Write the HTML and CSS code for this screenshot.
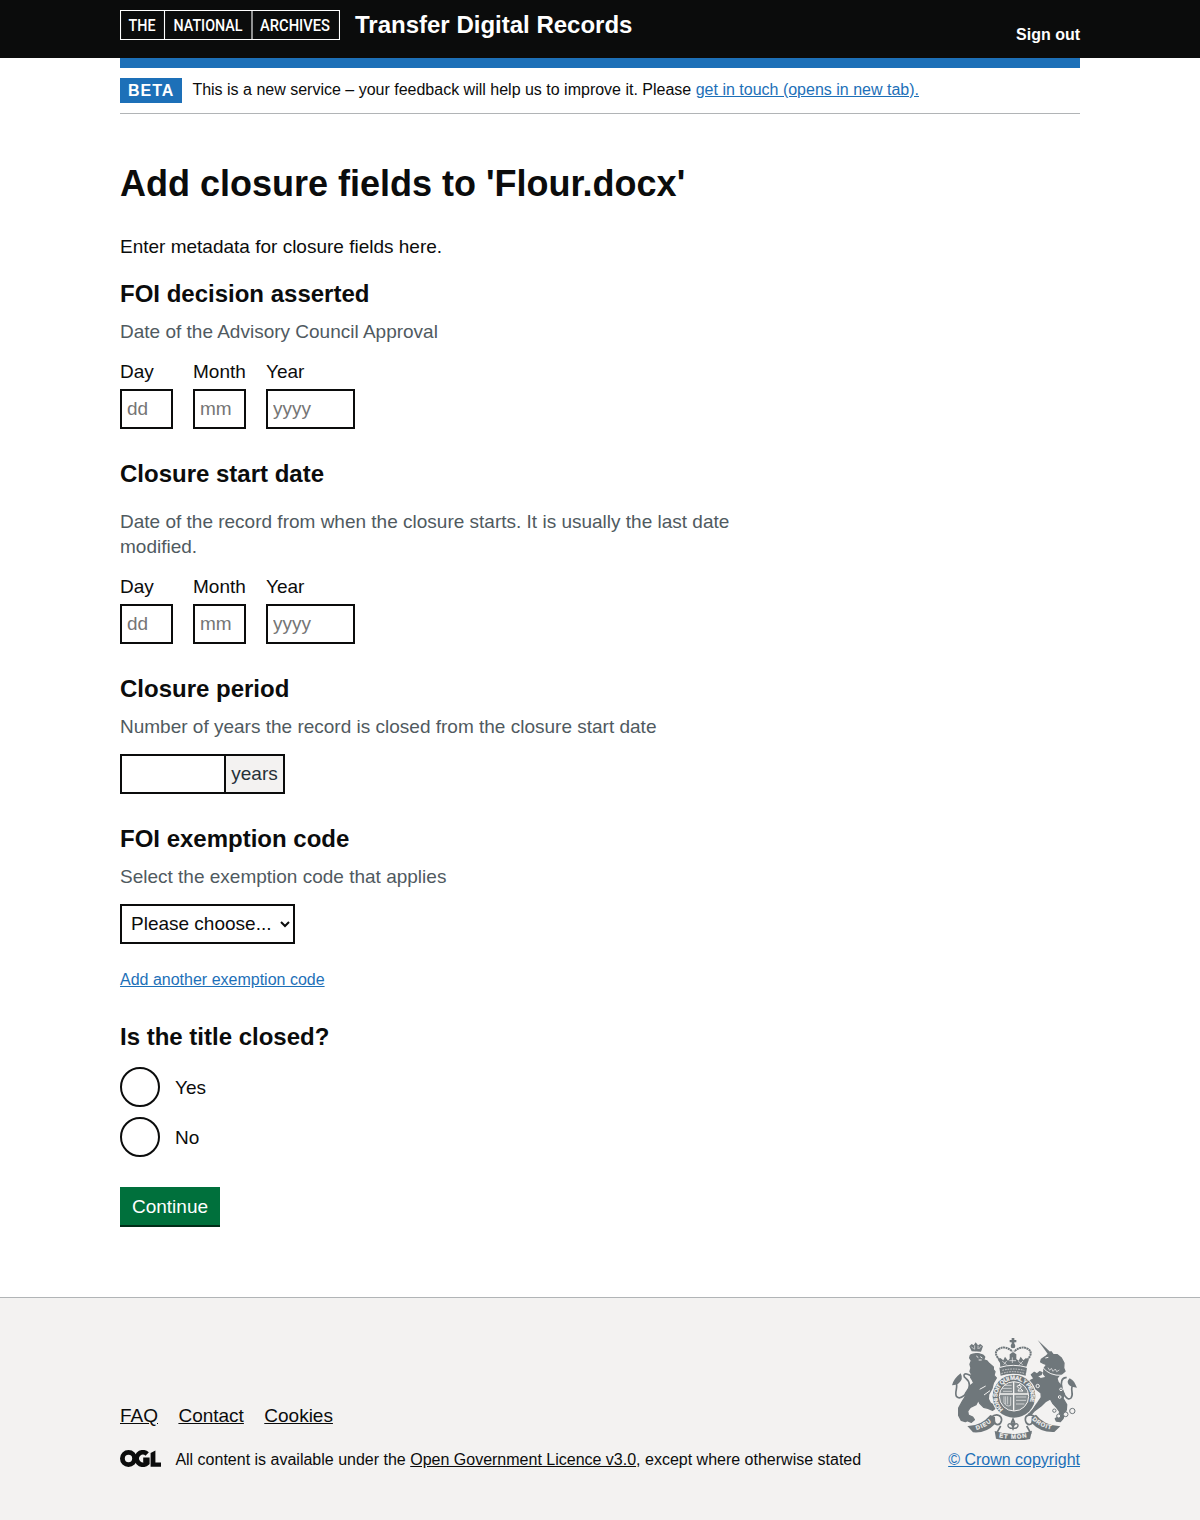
FILE: index.html
```html
<!DOCTYPE html>
<html lang="en">
<head>
<meta charset="utf-8">
<title>Add closure fields - Transfer Digital Records</title>
<link rel="stylesheet" href="styles.css">
</head>
<body>
<header class="header">
  <div class="container header-inner">
    <svg class="logo" width="220" height="30" viewBox="0 0 220 30" role="img" aria-label="The National Archives">
      <path d="M.5 .5H219.5V29.5H.5ZM44.5 1V29M132 1V29" fill="none" stroke="#fff" stroke-width="1.1"/>
      <g class="logo-text">
        <text x="8.5" y="20.8" textLength="27" lengthAdjust="spacingAndGlyphs">THE</text>
        <text x="53.5" y="20.8" textLength="69" lengthAdjust="spacingAndGlyphs">NATIONAL</text>
        <text x="140" y="20.8" textLength="70" lengthAdjust="spacingAndGlyphs">ARCHIVES</text>
      </g>
    </svg>
    <span class="service">Transfer Digital Records</span>
    <a class="signout" href="#">Sign out</a>
  </div>
</header>
<div class="container">
  <div class="bar"></div>
  <div class="phase">
    <strong class="tag">BETA</strong>
    <span>This is a new service – your feedback will help us to improve it. Please <a class="link" href="#">get in touch (opens in new tab).</a></span>
  </div>
  <main class="main">
    <h1>Add closure fields to 'Flour.docx'</h1>
    <p class="intro">Enter metadata for closure fields here.</p>
    <form>
      <section class="group">
        <h2>FOI decision asserted</h2>
        <p class="hint">Date of the Advisory Council Approval</p>
        <div class="dates">
          <label>Day<input class="w2" placeholder="dd"></label>
          <label>Month<input class="w2" placeholder="mm"></label>
          <label>Year<input class="w4" placeholder="yyyy"></label>
        </div>
      </section>
      <section class="group">
        <h2 class="spaced">Closure start date</h2>
        <p class="hint">Date of the record from when the closure starts. It is usually the last date modified.</p>
        <div class="dates">
          <label>Day<input class="w2" placeholder="dd"></label>
          <label>Month<input class="w2" placeholder="mm"></label>
          <label>Year<input class="w4" placeholder="yyyy"></label>
        </div>
      </section>
      <section class="group">
        <h2>Closure period</h2>
        <p class="hint">Number of years the record is closed from the closure start date</p>
        <div class="period"><input class="w5" aria-label="Years"><span class="suffix">years</span></div>
      </section>
      <section class="group code">
        <h2>FOI exemption code</h2>
        <p class="hint">Select the exemption code that applies</p>
        <select class="select"><option>Please choose...</option></select>
        <a class="link add" href="#">Add another exemption code</a>
      </section>
      <section class="group">
        <h2 class="radio-title">Is the title closed?</h2>
        <div class="radios">
          <label><input type="radio" name="closed">Yes</label>
          <label><input type="radio" name="closed">No</label>
        </div>
      </section>
      <button class="button" type="button">Continue</button>
    </form>
  </main>
</div>
<footer class="footer">
  <div class="container footer-inner">
    <div>
      <nav class="nav"><a href="#">FAQ</a><a href="#">Contact</a><a href="#">Cookies</a></nav>
      <div class="licence">
        <svg class="ogl" width="41" height="17" viewBox="0 0 41 17" role="img" aria-label="OGL">
          <circle cx="8.5" cy="8.5" r="6.1" fill="none" stroke="#0b0c0c" stroke-width="4.8"/>
          <path d="M27.2 4A6.2 6.2 0 1 0 27.2 13V9.9H23.2" fill="none" stroke="#0b0c0c" stroke-width="4.8"/>
          <path d="M30.6 3.1 35.4.4V12.4H41V16.7H30.6Z" fill="#0b0c0c"/>
        </svg>
        <span>All content is available under the <a href="#">Open Government Licence v3.0</a>, except where otherwise stated</span>
      </div>
    </div>
    <div class="crown">
      <svg width="125" height="102" viewBox="36 39 375 306" aria-hidden="true">
        <defs>
          <path id="garter" d="M190 253A50 50 0 1 1 254 253"/>
          <path id="ribbon-left" d="M109 315Q141 306 161 284"/>
          <path id="ribbon-mid" d="M177 337Q219 346 264 336"/>
          <path id="ribbon-right" d="M276 283Q300 308 337 314"/>
        </defs>
        <g fill="#6f777b">
          <!-- lion -->
          <g stroke="#6f777b" stroke-width="4" stroke-linejoin="round">
            <path d="M91 91 99 86 118 86 130 91 134 96 131 105 141 108 147 115 160 126 160 134 165 140 162 151 169 159 160 174 156 190 146 208 145 222 151 234 164 242 166 250 158 256 144 250 131 247 119 235 115 225 108 239 91 247 83 258 85 270 98 276 103 284 94 292 82 287 76 290 64 286 56 271 56 249 67 229 75 216 76 205 84 193 92 181 101 174 97 165 92 157 94 147 90 139 93 129 90 118 94 107 89 99Z"/>
          </g>
          <path d="M95 79 88 64 95 57 101 61 107 52 114 61 121 57 129 64 123 80Z"/>
          <path d="M36 181Q41 161 62 145Q71 162 57 174 51 180 36 181Z"/>
          <!-- unicorn -->
          <path d="M293 45 331 81 325 89Z"/>
          <g stroke="#6f777b" stroke-width="4" stroke-linejoin="round">
            <path d="M326 86 333 80 339 88 352 89 364 99 372 114 371 129 375 139 365 147 357 152 351 160 354 171 361 180 367 195 373 207 369 220 380 239 379 254 373 267 369 281 361 290 349 288 346 281 357 275 359 260 350 248 339 236 331 222 316 230 303 243 284 257 274 268 264 272 267 263 280 252 294 232 304 217 303 204 287 191 281 179 270 175 268 168 282 161 274 149 283 142 291 147 299 140 306 143 303 149 291 153 302 161 319 157 311 147 312 130 320 119 310 115 302 111 304 103 316 95Z"/>
          </g>
          <path d="M389 160Q398 164 403 172L411 188Q394 187 387 180 378 170 389 160Z"/>
          <!-- royal crown -->
          <circle cx="219" cy="63" r="7"/><path d="M215 39h8v29h-8zM209 45h20v7h-20z"/>
          <path d="M180 114 174 105 181 99 190 106 195 95 204 107 209 101 209 88 219 81 229 88 229 102 236 107 242 95 250 106 258 99 266 106 258 128 181 128Z"/>
          <path d="M178 128Q219 118 261 128L257 152Q219 140 182 152Z"/>
          <circle cx="222" cy="214" r="67" fill="#f3f2f1"/>
          <circle cx="222" cy="214" r="64"/>
          <!-- ribbons -->
          <path d="M82 303Q122 304 151 270L165 276 166 296Q137 326 99 322ZM343 321 361 304Q311 301 288 269L275 276 274 293Q302 323 343 321ZM164 318Q219 337 276 317L270 342Q219 353 168 341Z"/>
        </g>
        <g fill="none" stroke="#6f777b" stroke-width="5">
          <path d="M47 172C57 185 41 203 50 215 61 226 87 206 88 180 88 160 70 161 72 151 73 143 86 148 93 153" stroke-width="5"/>
          <path d="M401 178C386 190 404 206 393 219 381 230 368 204 366 190 361 174 365 155 380 158" stroke-width="5"/>
          <path d="M184 110C164 91 163 78 178 71 195 62 211 73 217 80M256 110C277 91 276 78 262 71 245 62 229 73 222 80" stroke-width="6" stroke-dasharray="6 1.5"/>
          <path d="M153 277C171 262 188 273 184 289 180 302 166 303 162 288M287 277C270 262 252 272 257 289 262 302 275 302 279 288M182 303 169 326M260 303 273 326"/>
          <circle cx="343" cy="257" r="5" stroke-width="3" fill="#f3f2f1"/><circle cx="356" cy="273" r="6" stroke-width="3" fill="#f3f2f1"/><circle cx="377" cy="268" r="7" stroke-width="3" fill="#f3f2f1"/><circle cx="397" cy="258" r="8" stroke-width="3"/>
        </g>
        <circle cx="222" cy="214" r="44" fill="#858c8f" stroke="#f3f2f1" stroke-width="3"/>
        <g fill="none" stroke="#f3f2f1" stroke-width="3">
          <path d="M221 171V257M179 207H265" stroke-width="4"/>
          <path d="M187 190h28M189 199h27M195 181h20M228 216h31M228 226h30M228 237h25M192 214v19q8 14 20 8v-25M197 214v23M203 214v24" stroke-width="2"/>
          <path d="M231 184q7-7 13 0l-3 6 8 8h-15l4-7zM239 177v6"/>
          <path d="M93 85Q110 79 130 85M180 127Q219 115 261 127"/>
          <path d="M109 93l6 5M121 95l6 4M116 105h9M316 99l9-2M137 183 119 193M150 197 132 210M308 127Q328 153 366 151"/>
          <path d="M187 136Q219 128 253 136M184 146Q219 134 256 146" stroke-width="2" stroke-dasharray="5 3"/>
          <path d="M94 65 102 73M104 61v12M114 62v10M124 63l-8 9M187 109l13 10M200 108l-9 11M217 97v17M208 107h20M235 109l13 10M249 108l-11 11" stroke-width="2"/>
          <path d="M324 128l5 8 5-6 5 9 7-7 4 8 8-5" stroke-width="2"/>
          <circle cx="293" cy="183" r="5"/><circle cx="363" cy="193" r="4"/><circle cx="359" cy="216" r="4"/>
        </g>
        <g fill="none" stroke="#6f777b" stroke-width="4">
          <path d="M219 285v31M219 309C205 313 201 300 206 297 213 294 217 301 219 308M219 309C233 313 237 300 232 297 225 294 221 301 219 308M210 310h19M219 281l-5 11 5 8 5-8Z"/>
        </g>
        <g class="motto">
          <text><textPath href="#garter" textLength="216">HONI SOIT QUI MAL Y PENSE</textPath></text>
          <text><textPath href="#ribbon-left" textLength="52">DIEU</textPath></text>
          <text><textPath href="#ribbon-mid" textLength="84">ET MON</textPath></text>
          <text><textPath href="#ribbon-right" textLength="65">DROIT</textPath></text>
        </g>
      </svg>
      <a class="link" href="#">© Crown copyright</a>
    </div>
  </div>
</footer>
</body>
</html>
```
FILE: styles.css
```css
* { box-sizing: border-box; }
body { margin: 0; background: #fff; color: #0b0c0c; font: 19px/25px "Liberation Sans", Arial, sans-serif; }
h1, h2, p { margin: 0; }
.container { width: 960px; margin: 0 auto; }
.header { height: 58px; background: #0b0c0c; color: #fff; }
.header-inner { display: flex; padding-top: 10px; }
.logo { display: block; flex: none; }
.logo-text { fill: #fff; font: 500 15.6px Roboto, sans-serif; }
.service { margin-left: 15px; font-size: 24px; font-weight: 700; line-height: 30px; }
.signout { margin: 15px 0 0 auto; color: #fff; font-size: 16px; font-weight: 700; line-height: 20px; text-decoration: none; }
.bar { height: 10px; background: #1d70b8; }
.phase { display: flex; height: 46px; padding-top: 10px; border-bottom: 1px solid #b1b4b6; font-size: 16px; line-height: 23px; }
.tag { height: 25px; margin-right: 10px; padding: 0 8px; background: #1d70b8; color: #fff; line-height: 25px; letter-spacing: 1px; }
.link { color: #1d70b8; }
.main { padding: 50px 0 70px; }
h1 { margin-bottom: 30px; font-size: 36px; line-height: 40px; }
h2 { margin-bottom: 10px; font-size: 24px; line-height: 30px; }
.spaced { margin-bottom: 20px; }
.intro { margin-bottom: 20px; }
.group { width: 640px; margin-bottom: 30px; }
.hint { margin-bottom: 15px; color: #505a5f; }
.dates { display: flex; gap: 20px; }
.dates label { display: flex; flex-direction: column; gap: 5px; }
input { height: 40px; margin: 0; padding: 5px; border: 2px solid #0b0c0c; border-radius: 0; background: #fff; font: inherit; }
.w2 { width: 53px; }
.w4 { width: 89px; }
.w5 { width: 106px; }
.period { display: flex; }
.suffix { height: 40px; width: 59px; border: 2px solid #0b0c0c; border-left: 0; background: #f3f2f1; color: #263038; line-height: 36px; text-align: center; }
.select { display: block; width: 175px; height: 40px; padding: 4px 5px 6px; border: 2px solid #0b0c0c; border-radius: 0; background: #fff; color: #0b0c0c; font: inherit; }
.add { display: inline-block; margin-top: 26px; font-size: 16px; line-height: 20px; vertical-align: top; }
.code { height: 168px; }
.radio-title { margin-bottom: 15px; }
.radios { display: flex; flex-direction: column; gap: 10px; }
.radios label { display: flex; align-items: center; gap: 15px; }
.radios input { width: 40px; padding: 0; border-radius: 50%; appearance: none; }
.button { display: block; width: 100px; height: 38px; margin-bottom: 2px; padding: 0; border: 0; background: #00703c; color: #fff; box-shadow: 0 2px 0 #002d18; font: inherit; }
.footer { height: 223px; border-top: 1px solid #b1b4b6; background: #f3f2f1; }
.footer-inner { display: flex; justify-content: space-between; padding-top: 40px; font-size: 16px; line-height: 20px; }
.footer a:not(.link) { color: #0b0c0c; }
.nav { display: flex; gap: 20.4px; margin-top: 65px; font-size: 19px; line-height: 25px; }
.licence { display: flex; margin-top: 22px; }
.ogl { margin-right: 14.4px; }
.crown { display: flex; flex-direction: column; align-items: center; gap: 10px; }
.crown svg { margin-left: 1px; }
.motto { fill: #f3f2f1; stroke: #f3f2f1; stroke-width: .5px; font: 700 18px "Liberation Sans", Arial, sans-serif; }
```
